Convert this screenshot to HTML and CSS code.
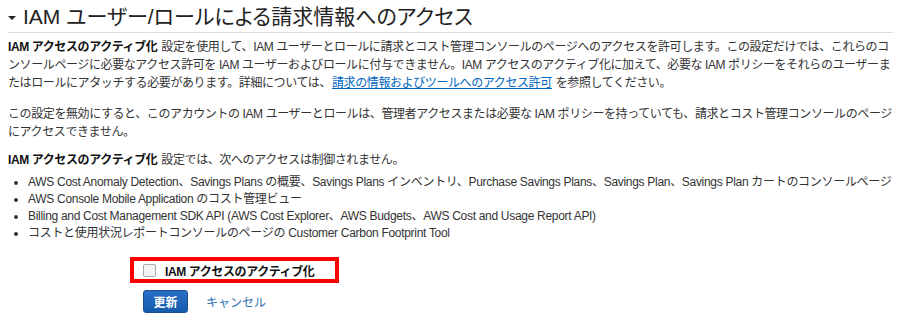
FILE: index.html
```html
<!DOCTYPE html>
<html lang="ja">
<head>
<meta charset="utf-8">
<link rel="stylesheet" href="styles.css">
</head>
<body>
<div class="page">
  <h2 class="title"><span class="caret"></span>IAM ユーザー/ロールによる請求情報へのアクセス</h2>
  <p class="para first"><b>IAM アクセスのアクティブ化</b> 設定を使用して、IAM ユーザーとロールに請求とコスト管理コンソールのページへのアクセスを許可します。この設定だけでは、これらのコンソールページに必要なアクセス許可を IAM ユーザーおよびロールに付与できません。IAM アクセスのアクティブ化に加えて、必要な IAM ポリシーをそれらのユーザーまたはロールにアタッチする必要があります。詳細については、<a class="link" href="#">請求の情報およびツールへのアクセス許可</a> を参照してください。</p>
  <p class="para second">この設定を無効にすると、このアカウントの IAM ユーザーとロールは、管理者アクセスまたは必要な IAM ポリシーを持っていても、請求とコスト管理コンソールのページにアクセスできません。</p>
  <p class="para third"><b>IAM アクセスのアクティブ化</b> 設定では、次へのアクセスは制御されません。</p>
  <ul class="list">
    <li>AWS Cost Anomaly Detection、Savings Plans の概要、Savings Plans インベントリ、Purchase Savings Plans、Savings Plan、Savings Plan カートのコンソールページ</li>
    <li>AWS Console Mobile Application のコスト管理ビュー</li>
    <li>Billing and Cost Management SDK API (AWS Cost Explorer、AWS Budgets、AWS Cost and Usage Report API)</li>
    <li>コストと使用状況レポートコンソールのページの Customer Carbon Footprint Tool</li>
  </ul>
  <div class="highlight">
    <label class="check"><span class="box"></span>IAM アクセスのアクティブ化</label>
  </div>
  <div class="actions">
    <button class="btn">更新</button>
    <a class="cancel" href="#">キャンセル</a>
  </div>
</div>
</body>
</html>
```

FILE: styles.css
```css
html, body {
  margin: 0;
  padding: 0;
  background: #fff;
}
.page {
  padding: 0 7px 0 8px;
  font-family: "Liberation Sans", "Noto Sans CJK JP", sans-serif;
  font-size: 12px;
  color: #333;
  letter-spacing: -0.4px;
}
.title {
  margin: 0;
  padding: 3px 0 1px 0;
  font-size: 21px;
  line-height: 28px;
  font-weight: normal;
  color: #222;
  border-bottom: 1px solid #ddd;
  display: flex;
  align-items: center;
  letter-spacing: 0;
  font-feature-settings: "palt";
}
.caret {
  width: 0;
  height: 0;
  border-left: 4px solid transparent;
  border-right: 4px solid transparent;
  border-top: 4px solid #222;
  margin: 1px 7px 0 0;
}
.para {
  margin: 0;
  line-height: 18px;
}
.para b {
  color: #111;
  margin-right: 1px;
}
.first { margin-top: 5px; }
.second { margin-top: 13px; }
.third { margin-top: 10px; }
.link {
  color: #0066c0;
  text-decoration: underline;
  margin-left: 1px;
  margin-right: 1px;
}
.list {
  margin: 5px 0 0 0;
  padding-left: 20px;
  line-height: 17px;
  letter-spacing: -0.3px;
}
.highlight {
  margin: 15px 0 0 122px;
  width: 192px;
  height: 18px;
  border: 4px solid #f00;
  display: flex;
  align-items: center;
  padding-left: 9px;
}
.check {
  display: flex;
  align-items: center;
  font-weight: bold;
  color: #111;
}
.box {
  width: 11px;
  height: 11px;
  border: 1px solid #aaa;
  border-radius: 2px;
  background: #f4f4f4;
  margin-right: 9px;
}
.actions {
  margin: 7px 0 0 135px;
  display: flex;
  align-items: center;
}
.btn {
  width: 45px;
  height: 23px;
  border: 1px solid #1b4d91;
  border-radius: 3px;
  background: linear-gradient(#2a6fc9, #135aab);
  color: #fff;
  font-family: "Liberation Sans", "Noto Sans CJK JP", sans-serif;
  font-weight: bold;
  font-size: 12px;
  padding: 0;
}
.cancel {
  margin-left: 18px;
  color: #3273b5;
  text-decoration: none;
  font-size: 12px;
  letter-spacing: 0;
}
```
